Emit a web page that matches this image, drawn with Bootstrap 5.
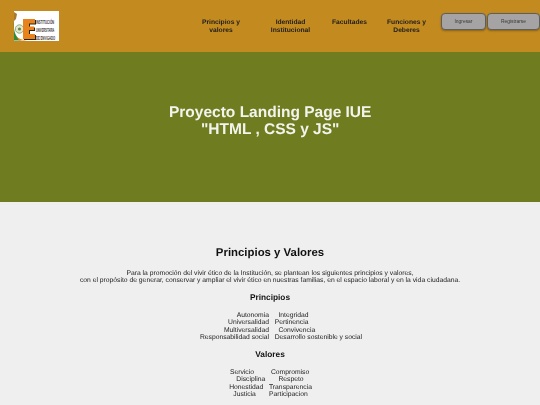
<!DOCTYPE html>
<html lang="es">
<head>
<meta charset="utf-8">
<title>Proyecto Landing Page IUE</title>
<link href="https://cdn.jsdelivr.net/npm/bootstrap@5.3.0/dist/css/bootstrap.min.css" rel="stylesheet">
<style>
html,body{height:405px;overflow:hidden}
body{background:#efefef;color:#1c1c1c;font-family:"Liberation Sans",Arial,sans-serif;font-size:6.75px;line-height:7.5px;text-rendering:geometricPrecision}
.cabecera{height:52px;background:#c38a20;padding-left:13px}
.capa-gris{will-change:transform}
.logo-iue{width:46px;height:30px;flex:none;margin-right:132px}
.menu-iue{width:256px;margin-top:18.5px;align-self:flex-start}
.menu-iue a{color:#1c1c1c;font-size:6.7px;font-weight:700;line-height:7.5px;text-align:center;text-decoration:none;display:block}
.m1{width:60px}.m2{width:60px;margin-left:9.5px}.m3{width:40px;margin-left:9px}.m4{width:60px;margin-left:7px}
.botones{margin-left:1px;gap:1px;margin-top:13px;align-self:flex-start}
.boton-iue{height:17px;width:45px;padding:0;background:#a5a3a4;border:1px solid #5e5e5a;border-radius:4px;font-size:4.9px;color:#3a3a3a;box-shadow:0 1px 2px rgba(0,0,0,.3)}
.boton-iue.ancho{width:53px}
.portada{height:150px;background:#6f7d20;color:#f4f4ee;padding-bottom:12px}
.portada h1{font-size:15.5px;font-weight:700;line-height:17px;margin:0}
.contenido{padding-top:43.5px}
.contenido h2{font-size:11.4px;font-weight:700;line-height:15px;margin:0 0 9px;color:#111}
.contenido h3{font-size:8.3px;font-weight:700;line-height:11px;margin:0 0 9px;color:#111}
.contenido p{margin:0 0 7px}
.lista-iue{display:grid;grid-template-columns:269px 1fr;white-space:pre;margin-bottom:7px}
.lista-iue span:nth-child(odd){text-align:right}
</style>
</head>
<body>
<header class="cabecera d-flex align-items-center">
<svg class="logo-iue" viewBox="0 0 46 30" role="img" aria-label="Logo IUE">
<rect width="46" height="30" fill="#fff"/>
<path d="M0 0h1v30H0z" fill="#c38a20"/>
<path d="M1 10C0 18 2 26 8 29.500H1z" fill="#2f8a3c"/>
<path d="M3 25c3 3 7 4 11 4.500H6z" fill="#e08a2a"/>
<circle cx="6.500" cy="18" r="4.200" fill="#dfe8d0" stroke="#7c9a66" stroke-width=".8"/>
<circle cx="6.500" cy="18" r="1.600" fill="#6d7f45"/>
<path d="M1 1l3 2-1 5-2 2z" fill="#a87a30"/>
<path d="M11 9h12v4.500h-6v3h5v3.500h-5v4h6v5H11z" fill="#2a2210"/>
<path d="M10 8h12v4.500h-6v3h5v3.500h-5v4h6v5H10z" fill="#e8821d"/>
<g font-family="Liberation Sans" font-size="5.800" font-weight="700" fill="#3c3c3c">
<text transform="translate(23 12.500) scale(.49 1)">INSTITUCIÓN</text>
<text transform="translate(23 20.500) scale(.41 1)">UNIVERSITARIA</text>
<text transform="translate(23 28.500) scale(.47 1)">DE ENVIGADO</text>
</g>
</svg>
<nav class="menu-iue d-flex capa-gris">
<a class="m1" href="#">Principios y valores</a>
<a class="m2" href="#">Identidad Institucional</a>
<a class="m3" href="#">Facultades</a>
<a class="m4" href="#">Funciones y Deberes</a>
</nav>
<div class="botones d-flex capa-gris">
<button class="btn boton-iue" type="button">Ingresar</button>
<button class="btn boton-iue ancho" type="button">Registrarse</button>
</div>
</header>
<section class="portada d-flex align-items-center justify-content-center text-center">
<h1 class="capa-gris">Proyecto Landing Page IUE<br>"HTML , CSS y JS"</h1>
</section>
<main class="contenido text-center capa-gris">
<h2>Principios y Valores</h2>
<p>Para la promoción del vivir ético de la Institución, se plantean los siguientes principios y valores,<br>con el propósito de generar, conservar y ampliar el vivir ético en nuestras familias, en el espacio laboral y en la vida ciudadana.</p>
<h3>Principios</h3>
<div class="lista-iue text-start">
<span>Autonomia</span><span>     Integridad</span>
<span>Universalidad</span><span>   Pertinencia</span>
<span>Multiversalidad</span><span>     Convivencia</span>
<span>Responsabilidad social</span><span>   Desarrollo sostenible y social</span>
</div>
<h3>Valores</h3>
<div class="lista-iue text-start">
<span>Servicio        </span><span> Compromiso</span>
<span>Disciplina  </span><span>     Respeto</span>
<span>Honestidad   </span><span>Transparencia</span>
<span>Justicia       </span><span>Participacion</span>
</div>
</main>
<script src="https://cdn.jsdelivr.net/npm/bootstrap@5.3.0/dist/js/bootstrap.bundle.min.js"></script>
</body>
</html>
